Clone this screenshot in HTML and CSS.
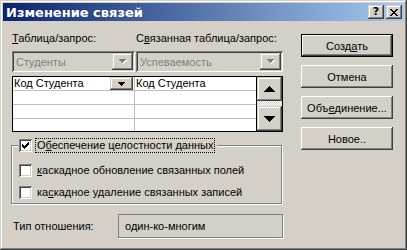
FILE: index.html
```html
<!DOCTYPE html>
<html lang="ru">
<head>
    <meta charset="UTF-8">
    <title>Изменение связей</title>
    <link rel="stylesheet" href="styles.css">
</head>
<body>
    <div class="window">
        <div class="titlebar">
            <span class="title">Изменение связей</span>
            <div class="caption-btns">
                <span class="cap-btn help">?</span>
                <span class="cap-btn close">
                    <svg width="8" height="7" viewBox="0 0 8 7" shape-rendering="crispEdges">
                        <path d="M0 0h2v1h1v1h2v-1h1v-1h2v1h-1v1h-1v1h-1v1h1v1h1v1h1v1h-2v-1h-1v-1h-2v1h-1v1H0v-1h1v-1h1v-1h1v-1H2v-1H1v-1H0z" fill="#000"/>
                    </svg>
                </span>
            </div>
        </div>

        <div class="body">
            <div class="main">
                <div class="pair labels">
                    <span class="col-left"><u>Т</u>аблица/запрос:</span>
                    <span class="col-right">С<u>в</u>язанная таблица/запрос:</span>
                </div>

                <div class="pair combos">
                    <div class="combo col-left">
                        <span class="combo-text">Студенты</span>
                        <span class="combo-drop">
                            <svg class="arrow-off" width="8" height="5" viewBox="0 0 8 5" shape-rendering="crispEdges">
                                <path d="M1 1h7v1h-1v1h-1v1h-1v1h-1v-1h-1v-1h-1v-1H1z" fill="#fff"/>
                                <path d="M0 0h7v1h-1v1h-1v1h-1v1h-1v-1h-1v-1h-1v-1H0z" fill="#808080"/>
                            </svg>
                        </span>
                    </div>
                    <div class="combo col-right">
                        <span class="combo-text">Успеваемость</span>
                        <span class="combo-drop">
                            <svg class="arrow-off" width="8" height="5" viewBox="0 0 8 5" shape-rendering="crispEdges">
                                <path d="M1 1h7v1h-1v1h-1v1h-1v1h-1v-1h-1v-1h-1v-1H1z" fill="#fff"/>
                                <path d="M0 0h7v1h-1v1h-1v1h-1v1h-1v-1h-1v-1h-1v-1H0z" fill="#808080"/>
                            </svg>
                        </span>
                    </div>
                </div>

                <div class="fields">
                    <div class="grid">
                        <div class="row">
                            <div class="cell cell-left">
                                <span>Код Студента</span>
                                <span class="cell-drop">
                                    <svg width="7" height="4" viewBox="0 0 7 4" shape-rendering="crispEdges">
                                        <path d="M0 0h7v1h-1v1h-1v1h-1v1h-1v-1h-1v-1h-1v-1H0z" fill="#000"/>
                                    </svg>
                                </span>
                            </div>
                            <div class="cell">Код Студента</div>
                        </div>
                        <div class="row"><div class="cell cell-left"></div><div class="cell"></div></div>
                        <div class="row"><div class="cell cell-left"></div><div class="cell"></div></div>
                        <div class="row"><div class="cell cell-left"></div><div class="cell"></div></div>
                    </div>
                    <div class="scroll">
                        <span class="sbtn up">
                            <svg width="11" height="6" viewBox="0 0 11 6" shape-rendering="crispEdges">
                                <path d="M5 0h1v1h1v1h1v1h1v1h1v1h1v1H0v-1h1v-1h1v-1h1v-1h1v-1h1z" fill="#000"/>
                            </svg>
                        </span>
                        <span class="track"></span>
                        <span class="sbtn down">
                            <svg width="11" height="6" viewBox="0 0 11 6" shape-rendering="crispEdges">
                                <path d="M0 0h11v1h-1v1h-1v1h-1v1h-1v1h-1v1h-1v-1h-1v-1h-1v-1h-1v-1h-1v-1H0z" fill="#000"/>
                            </svg>
                        </span>
                    </div>
                </div>

                <fieldset class="group">
                    <legend class="check-row">
                        <span class="checkbox">
                            <svg width="7" height="7" viewBox="0 0 7 7" shape-rendering="crispEdges">
                                <path d="M0 2h1v3H0zM1 3h1v3H1zM2 4h1v3H2zM3 3h1v3H3zM4 2h1v3H4zM5 1h1v3H5zM6 0h1v3H6z" fill="#000"/>
                            </svg>
                        </span>
                        <span class="check-label focused">О<u>б</u>еспечение целостности данных</span>
                    </legend>
                    <div class="check-row option">
                        <span class="checkbox"></span>
                        <span class="check-label"><u>к</u>аскадное обновление связанных полей</span>
                    </div>
                    <div class="check-row option">
                        <span class="checkbox"></span>
                        <span class="check-label">ка<u>с</u>кадное удаление связанных записей</span>
                    </div>
                </fieldset>

                <div class="relation">
                    <span class="relation-label">Тип отношения:</span>
                    <span class="relation-value">один-ко-многим</span>
                </div>
            </div>

            <div class="buttons">
                <span class="btn default">Созд<u>а</u>ть</span>
                <span class="btn">Отмена</span>
                <span class="btn">Объ<u>е</u>динение...</span>
                <span class="btn">Новое..</span>
            </div>
        </div>
    </div>
</body>
</html>
```

FILE: styles.css
```css
body {
  margin: 0;
  background: #d4d0c8;
}

u {
  text-underline-offset: 1px;
}

/* window frame */

.window {
  width: 407px;
  height: 250px;
  box-sizing: border-box;
  padding: 3px;
  background: #d4d0c8;
  box-shadow: inset -1px -1px #404040, inset 1px 1px #d4d0c8,
              inset -2px -2px #808080, inset 2px 2px #fff;
  font-family: "Liberation Sans", Arial, sans-serif;
  font-size: 11px;
  color: #000;
}

.titlebar {
  height: 18px;
  display: flex;
  align-items: center;
  justify-content: space-between;
  padding: 0 2px 0 3px;
  background: linear-gradient(to right, #0a246a, #a6caf0);
}

.title {
  font-family: "DejaVu Sans", sans-serif;
  font-weight: bold;
  font-size: 13px;
  color: #fff;
}

.caption-btns {
  display: flex;
  gap: 2px;
}

.cap-btn {
  width: 16px;
  height: 14px;
  display: flex;
  align-items: center;
  justify-content: center;
  background: #d4d0c8;
  box-shadow: inset -1px -1px #404040, inset 1px 1px #d4d0c8,
              inset -2px -2px #808080, inset 2px 2px #fff;
}

.cap-btn.help {
  font-family: "DejaVu Sans", sans-serif;
  font-weight: bold;
  font-size: 11px;
  line-height: 14px;
}

/* body */

.body {
  display: flex;
  gap: 18px;
  padding: 11px 0 0 9px;
}

.main {
  width: 271px;
}

.pair {
  display: flex;
  gap: 1px;
}

.col-left {
  width: 123px;
}

.col-right {
  width: 147px;
}

.labels {
  line-height: 13px;
}

.combos {
  margin-top: 6px;
}

.combo {
  height: 21px;
  box-sizing: border-box;
  display: flex;
  align-items: center;
  justify-content: space-between;
  padding: 2px;
  box-shadow: inset 1px 1px #808080, inset -1px -1px #fff,
              inset 2px 2px #404040, inset -2px -2px #d4d0c8;
}

.combo-text {
  padding-left: 2px;
  color: #808080;
}

.combo-drop {
  width: 21px;
  height: 17px;
  display: flex;
  align-items: center;
  justify-content: center;
  box-shadow: inset -1px -1px #404040, inset 1px 1px #d4d0c8,
              inset -2px -2px #808080, inset 2px 2px #fff;
}

/* field grid */

.fields {
  margin-top: 4px;
  height: 56px;
  box-sizing: border-box;
  display: flex;
  border: 1px solid #000;
}

.grid {
  flex: 1;
  background: #fff;
  border-right: 1px solid #000;
  display: flex;
  flex-direction: column;
}

.row {
  height: 13px;
  display: flex;
  border-bottom: 1px solid #c0c0c0;
}

.row:last-child {
  flex: 1;
  border-bottom: none;
}

.cell {
  flex: 1;
  padding-left: 1px;
  line-height: 13px;
  display: flex;
  justify-content: space-between;
}

.cell-left {
  flex: none;
  width: 120px;
  border-right: 1px solid #c0c0c0;
}

.cell-drop {
  width: 23px;
  margin-right: 1px;
  display: flex;
  align-items: center;
  justify-content: center;
  background: #d4d0c8;
  box-shadow: inset -1px -1px #404040, inset 1px 1px #d4d0c8,
              inset -2px -2px #808080, inset 2px 2px #fff;
}

.scroll {
  width: 25px;
  display: flex;
  flex-direction: column;
}

.sbtn {
  display: flex;
  align-items: center;
  justify-content: center;
  background: #d4d0c8;
  box-shadow: inset -1px -1px #404040, inset 1px 1px #d4d0c8,
              inset -2px -2px #808080, inset 2px 2px #fff;
}

.sbtn.up {
  height: 24px;
}

.sbtn.down {
  height: 25px;
}

.track {
  height: 5px;
  background: conic-gradient(#fff 25%, #d4d0c8 0 50%, #fff 0 75%, #d4d0c8 0);
  background-size: 2px 2px;
}

/* group box */

.group {
  margin: 7px 0 0 -1px;
  padding: 0 0 4px 6px;
  width: 271px;
  box-sizing: border-box;
  min-inline-size: 0;
  border: 1px solid #808080;
  box-shadow: 1px 1px 0 #fff, inset 1px 1px 0 #fff;
}

.group legend {
  padding: 0 3px 0 1px;
  background: #d4d0c8;
}

.check-row {
  display: flex;
  align-items: center;
  line-height: 13px;
}

.check-row.option {
  margin-top: 12px;
  padding-left: 1px;
}

.check-row.option + .check-row.option {
  margin-top: 9px;
}

.checkbox {
  width: 13px;
  height: 13px;
  box-sizing: border-box;
  display: flex;
  align-items: center;
  justify-content: center;
  background: #fff;
  box-shadow: inset 1px 1px #808080, inset -1px -1px #fff,
              inset 2px 2px #404040, inset -2px -2px #d4d0c8;
}

.check-label {
  margin-left: 4px;
  padding: 0 1px;
}

.check-label.focused {
  outline: 1px dotted #000;
}

/* relation type */

.relation {
  margin-top: 10px;
  display: flex;
  align-items: center;
}

.relation-label {
  width: 105px;
  padding-left: 1px;
}

.relation-value {
  width: 165px;
  height: 24px;
  box-sizing: border-box;
  display: flex;
  align-items: center;
  padding-left: 6px;
  border: 1px solid #808080;
  box-shadow: 1px 1px 0 #fff;
}

/* buttons */

.buttons {
  margin-top: 2px;
  display: flex;
  flex-direction: column;
  gap: 8px;
}

.btn {
  width: 92px;
  height: 23px;
  box-sizing: border-box;
  display: flex;
  align-items: center;
  justify-content: center;
  box-shadow: inset -1px -1px #404040, inset 1px 1px #fff,
              inset -2px -2px #808080, inset 2px 2px #d4d0c8;
}

.btn.default {
  border: 1px solid #000;
}
```
